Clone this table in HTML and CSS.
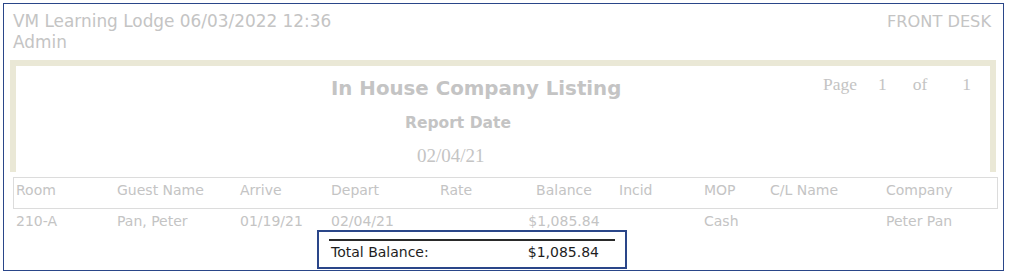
FILE: index.html
```html
<!DOCTYPE html>
<html>
<head>
<meta charset="utf-8">
<link rel="stylesheet" href="styles.css">
</head>
<body>
<div class="frame">
  <div class="top">
    <div class="top-left">
      <div>VM Learning Lodge 06/03/2022 12:36</div>
      <div>Admin</div>
    </div>
    <div class="top-right">FRONT DESK</div>
  </div>
  <div class="report">
    <div class="title-area">
      <div class="title">In House Company Listing</div>
      <div class="subtitle">Report Date</div>
      <div class="rdate">02/04/21</div>
    </div>
    <div class="page">
      <span class="p-label">Page</span><span class="p-num">1</span><span class="p-of">of</span><span class="p-tot">1</span>
    </div>
  </div>
  <div class="cols">
    <span class="c-room">Room</span>
    <span class="c-guest">Guest Name</span>
    <span class="c-arrive">Arrive</span>
    <span class="c-depart">Depart</span>
    <span class="c-rate">Rate</span>
    <span class="c-bal">Balance</span>
    <span class="c-incid">Incid</span>
    <span class="c-mop">MOP</span>
    <span class="c-cl">C/L Name</span>
    <span class="c-comp">Company</span>
  </div>
  <div class="row">
    <span class="c-room">210-A</span>
    <span class="c-guest">Pan, Peter</span>
    <span class="c-arrive">01/19/21</span>
    <span class="c-depart">02/04/21</span>
    <span class="c-rate"></span>
    <span class="c-bal">$1,085.84</span>
    <span class="c-incid"></span>
    <span class="c-mop">Cash</span>
    <span class="c-cl"></span>
    <span class="c-comp">Peter Pan</span>
  </div>
  <div class="total">
    <div class="total-inner">
      <span>Total Balance:</span>
      <span>$1,085.84</span>
    </div>
  </div>
</div>
</body>
</html>
```
FILE: styles.css
```css
html, body {
  margin: 0;
  padding: 0;
  background: #ffffff;
}
body {
  font-family: "DejaVu Sans", Verdana, sans-serif;
  color: #c4c4c4;
}
.frame {
  margin: 3px 0 0 3px;
  width: 1001px;
  height: 268px;
  border: 1px solid #2a4689;
  box-sizing: border-box;
}
.top {
  display: flex;
  justify-content: space-between;
  padding: 7px 12px 0 9px;
  font-size: 16.9px;
  line-height: 21px;
  box-sizing: border-box;
  height: 56px;
}
.top-right {
  font-size: 16.2px;
}
.report {
  margin-left: 6px;
  width: 986px;
  height: 112px;
  border: 6px solid #eae8d6;
  border-bottom: none;
  box-sizing: border-box;
  display: flex;
  position: relative;
}
.title-area {
  flex: 1;
  display: flex;
  flex-direction: column;
}
.title {
  font-weight: bold;
  font-size: 19.8px;
  line-height: 26px;
  margin-top: 10px;
  padding-left: 315px;
}
.subtitle {
  font-weight: bold;
  font-size: 15.5px;
  line-height: 20px;
  margin-top: 11px;
  padding-left: 389px;
}
.rdate {
  font-family: "Liberation Serif", "Times New Roman", serif;
  font-size: 19px;
  line-height: 22px;
  margin-top: 12px;
  padding-left: 401px;
}
.page {
  position: absolute;
  left: 807px;
  top: 7px;
  font-family: "Liberation Serif", "Times New Roman", serif;
  font-size: 17.5px;
  line-height: 22px;
  display: flex;
}
.p-num { margin-left: 21px; }
.p-of { margin-left: 26px; }
.p-tot { margin-left: 35px; }
.cols, .row {
  display: flex;
  font-size: 14px;
  line-height: 16px;
}
.cols {
  margin: 5px 0 0 9px;
  width: 985px;
  height: 32px;
  border: 1px solid #dcdcdc;
  box-sizing: border-box;
  align-items: flex-start;
  padding: 4px 0 0 2px;
}
.row {
  margin: 4px 0 0 9px;
  height: 16px;
  align-items: center;
  padding-left: 3px;
}
.cols span, .row span {
  display: block;
  box-sizing: border-box;
  white-space: nowrap;
}
.c-room { width: 101px; }
.c-guest { width: 123px; }
.c-arrive { width: 91px; }
.c-depart { width: 109px; }
.c-rate { width: 70px; }
.c-bal { width: 108px; text-align: center; }
.c-incid { width: 86px; padding-left: 1px; }
.c-mop { width: 66px; }
.c-cl { width: 116px; }
.c-comp { width: 110px; }
.total {
  margin: 1px 0 0 313px;
  width: 310px;
  height: 39px;
  border: 2px solid #2a4689;
  box-sizing: border-box;
  padding: 7px 10px 0 10px;
}
.total-inner {
  border-top: 2px solid #2a2a2a;
  display: flex;
  justify-content: space-between;
  padding: 2px 16px 0 2px;
  font-size: 14px;
  line-height: 19px;
  color: #1e1e1e;
}
```
